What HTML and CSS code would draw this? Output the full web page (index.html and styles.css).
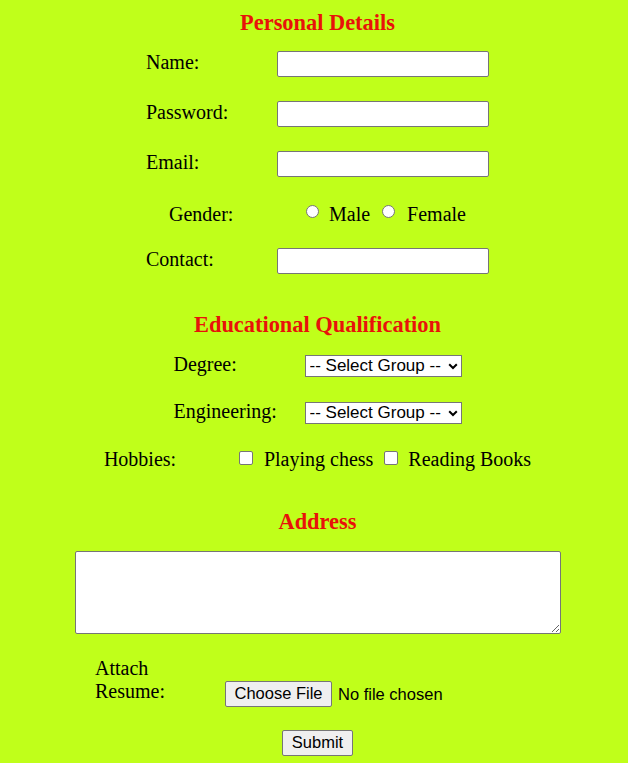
FILE: index.html
```html
<!DOCTYPE html>
<html lang="en">
<head>
<meta charset="utf-8">
<title>Registration Form</title>
<link rel="stylesheet" href="styles.css">
</head>
<body>
<form class="form">
  <h3 class="heading heading-first">Personal Details</h3>

  <div class="row row-personal row-name">
    <label class="lbl" for="name">Name:</label>
    <input class="text-input" type="text" id="name">
  </div>
  <div class="row row-personal row-password">
    <label class="lbl" for="pwd">Password:</label>
    <input class="text-input" type="password" id="pwd">
  </div>
  <div class="row row-personal row-email">
    <label class="lbl" for="email">Email:</label>
    <input class="text-input" type="email" id="email">
  </div>
  <div class="row row-gender">
    <span class="lbl lbl-gender">Gender:</span>
    <input class="radio" type="radio" name="gender" id="male">
    <label class="opt opt-male" for="male">Male</label>
    <input class="radio radio-2" type="radio" name="gender" id="female">
    <label class="opt opt-female" for="female">Female</label>
  </div>
  <div class="row row-personal row-contact">
    <label class="lbl" for="contact">Contact:</label>
    <input class="text-input" type="text" id="contact">
  </div>

  <h3 class="heading heading-edu">Educational Qualification</h3>

  <div class="row row-edu row-degree">
    <label class="lbl" for="degree">Degree:</label>
    <span class="sel-wrap">
      <select class="sel" id="degree">
        <option>-- Select Group --</option>
      </select>
      <svg class="chev" width="10" height="7" viewBox="0 0 10 7" aria-hidden="true"><path d="M1.2 1.2 L5 5 L8.8 1.2" fill="none" stroke="#000" stroke-width="2"/></svg>
    </span>
  </div>
  <div class="row row-edu row-engg">
    <label class="lbl" for="engg">Engineering:</label>
    <span class="sel-wrap">
      <select class="sel" id="engg">
        <option>-- Select Group --</option>
      </select>
      <svg class="chev" width="10" height="7" viewBox="0 0 10 7" aria-hidden="true"><path d="M1.2 1.2 L5 5 L8.8 1.2" fill="none" stroke="#000" stroke-width="2"/></svg>
    </span>
  </div>
  <div class="row row-hobbies">
    <span class="lbl lbl-hobbies">Hobbies:</span>
    <input class="check" type="checkbox" id="chess">
    <label class="opt opt-chess" for="chess">Playing chess</label>
    <input class="check check-2" type="checkbox" id="books">
    <label class="opt opt-books" for="books">Reading Books</label>
  </div>

  <h3 class="heading heading-address">Address</h3>
  <textarea class="address"></textarea>

  <div class="row row-attach">
    <label class="lbl lbl-attach" for="resume">Attach Resume:</label>
    <input class="file" type="file" id="resume">
  </div>

  <div class="submit-wrap">
    <input class="btn-submit" type="submit" value="Submit">
  </div>
</form>
</body>
</html>
```

FILE: styles.css
```css
html, body {
  margin: 0;
  padding: 0;
}

body {
  background: #c0ff1a;
  color: #000;
  font-family: "Liberation Serif", "Times New Roman", serif;
  font-size: 20px;
  padding-left: 7px;
}

.form {
  display: flex;
  flex-direction: column;
  align-items: center;
}

.heading {
  margin: 0;
  color: #e8120a;
  font-size: 22.4px;
  font-weight: bold;
  line-height: 26px;
  text-align: center;
}

.heading-first { margin-top: 9.5px; }
.heading-edu { margin-top: 37.7px; }
.heading-address { margin-top: 38px; }

.row {
  display: flex;
  align-items: flex-start;
}

.lbl {
  display: block;
  line-height: 23px;
  white-space: nowrap;
}

/* Personal details */
.row-personal .lbl { width: 131px; }
.row-name { margin-top: 15.5px; }
.row-password { margin-top: 24px; }
.row-email { margin-top: 23.5px; }
.row-contact { margin-top: 22.3px; }

.text-input {
  box-sizing: border-box;
  width: 212px;
  height: 26px;
  margin: 0;
  padding: 1px 3px;
  border: 1px solid #767676;
  border-radius: 2px;
  background: #fff;
  font: 16px "Liberation Sans", Arial, sans-serif;
}

/* Gender */
.row-gender {
  margin-top: 26.3px;
  height: 23px;
}
.lbl-gender { width: 137px; }

.radio, .check {
  -webkit-appearance: none;
  appearance: none;
  box-sizing: border-box;
  width: 13px;
  height: 13px;
  margin: 2.5px 0 0 0;
  border: 1px solid #767676;
  background: #fff;
  flex: none;
}
.radio { border-radius: 50%; }
.check { border-radius: 2px; width: 14px; height: 14px; }

.opt {
  line-height: 23px;
  white-space: nowrap;
}
.opt-male { margin-left: 10px; }
.radio-2 { margin-left: 12px; }
.opt-female { margin-left: 12px; }

/* Education */
.row-edu .lbl { width: 131px; }
.row-degree { margin-top: 15px; }
.row-engg { margin-top: 23.3px; }

.sel-wrap {
  position: relative;
  display: block;
  margin-top: 2px;
}
.sel {
  -webkit-appearance: none;
  appearance: none;
  display: block;
  box-sizing: border-box;
  width: 157px;
  height: 22px;
  margin: 0;
  padding: 0 18px 0 4px;
  border: 1px solid #767676;
  border-radius: 0;
  background: #fff;
  color: #000;
  font: 17px "Liberation Sans", Arial, sans-serif;
  line-height: 20px;
}
.chev {
  position: absolute;
  right: 4px;
  top: 8px;
  pointer-events: none;
}

/* Hobbies */
.row-hobbies {
  margin-top: 24.4px;
  height: 23px;
}
.lbl-hobbies { width: 135px; }
.row-hobbies .check { margin-top: 3px; }
.opt-chess { margin-left: 11px; }
.check-2 { margin-left: 11px; }
.opt-books { margin-left: 10px; }

/* Address */
.address {
  display: block;
  box-sizing: border-box;
  width: 486px;
  height: 83px;
  margin: 15.5px 0 0 0;
  border: 1px solid #767676;
  border-radius: 2px;
  background: #fff;
  resize: both;
  padding: 2px;
}

/* Attach resume */
.row-attach {
  margin-top: 22.7px;
  align-items: flex-end;
  width: 445px;
}
.lbl-attach {
  width: 100px;
  margin-right: 30px;
  white-space: normal;
  margin-bottom: 4px;
}

.file {
  width: 315px;
  height: 26px;
  margin: 0;
  padding: 0;
  font: 16.5px "Liberation Sans", Arial, sans-serif;
  color: #000;
}
.file::file-selector-button {
  box-sizing: border-box;
  width: 107px;
  height: 26px;
  margin: 0 6px 0 0;
  padding: 1px 6px;
  border: 1px solid #767676;
  border-radius: 2px;
  background: #efefef;
  color: #000;
  font: 16.5px "Liberation Sans", Arial, sans-serif;
}

/* Submit */
.submit-wrap {
  margin-top: 23.3px;
}
.btn-submit {
  box-sizing: border-box;
  width: 71px;
  height: 26px;
  margin: 0;
  padding: 1px 6px;
  border: 1px solid #767676;
  border-radius: 2px;
  background: #efefef;
  color: #000;
  font: 16.5px "Liberation Sans", Arial, sans-serif;
}
```
